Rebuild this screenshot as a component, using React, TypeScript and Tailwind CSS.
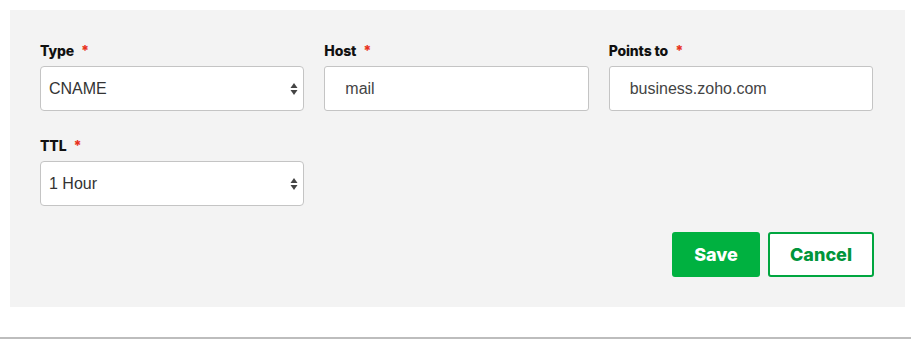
import React from 'react';

function Label({ text }: { text: string }) {
  return (
    <div className="h-5 mb-[6px] flex items-center gap-[7px] font-['Inter',sans-serif] text-[14px] font-extrabold text-[#111] tracking-[-0.01em]">
      {text}
      <span className="text-[#e8321c] text-[14px] leading-none mt-[2px]">*</span>
    </div>
  );
}

function SelectBox({ value }: { value: string }) {
  return (
    <div className="h-[45px] bg-white border border-[#c4c4c4] rounded-[4px] flex items-center justify-between pl-[8px] pr-[3px] font-['Liberation_Sans',Arial,sans-serif] text-[16px] text-[#333]">
      <span>{value}</span>
      <svg width="12" height="16" viewBox="0 0 12 16">
        <path d="M6 2 L9.5 7 L2.5 7 Z" fill="#444" />
        <path d="M6 14 L9.5 9 L2.5 9 Z" fill="#444" />
      </svg>
    </div>
  );
}

function TextBox({ value }: { value: string }) {
  return (
    <div className="h-[45px] bg-white border border-[#c4c4c4] rounded-[3px] flex items-center pl-[20px] font-['Liberation_Sans',Arial,sans-serif] text-[16px] text-[#444]">
      {value}
    </div>
  );
}

export default function App() {
  return (
    <div className="w-[911px] h-[339px] bg-white overflow-hidden">
      <div className="mx-[10px] mt-[10px] w-[895px] bg-[#f3f3f3] pt-[30px] pb-[30px] pl-[30px] pr-[31px]">
        <div className="grid grid-cols-3 gap-x-[20px] pr-[1px]">
          <div>
            <Label text="Type" />
            <SelectBox value="CNAME" />
          </div>
          <div>
            <Label text="Host" />
            <TextBox value="mail" />
          </div>
          <div>
            <Label text="Points to" />
            <TextBox value="business.zoho.com" />
          </div>
        </div>
        <div className="grid grid-cols-3 gap-x-[20px] mt-[24px] pr-[1px]">
          <div>
            <Label text="TTL" />
            <SelectBox value="1 Hour" />
          </div>
        </div>
        <div className="flex justify-end gap-[8px] mt-[26px]">
          <button className="w-[88px] h-[45px] bg-[#00b140] rounded-[3px] text-white font-['Inter',sans-serif] font-extrabold text-[18px]">
            Save
          </button>
          <button className="w-[106px] h-[45px] bg-white border-2 border-[#00a63f] rounded-[3px] text-[#00953a] font-['Inter',sans-serif] font-extrabold text-[18px]">
            Cancel
          </button>
        </div>
      </div>
      <div className="mt-[30px] h-[2px] bg-[#bdbdbd]" />
    </div>
  );
}
